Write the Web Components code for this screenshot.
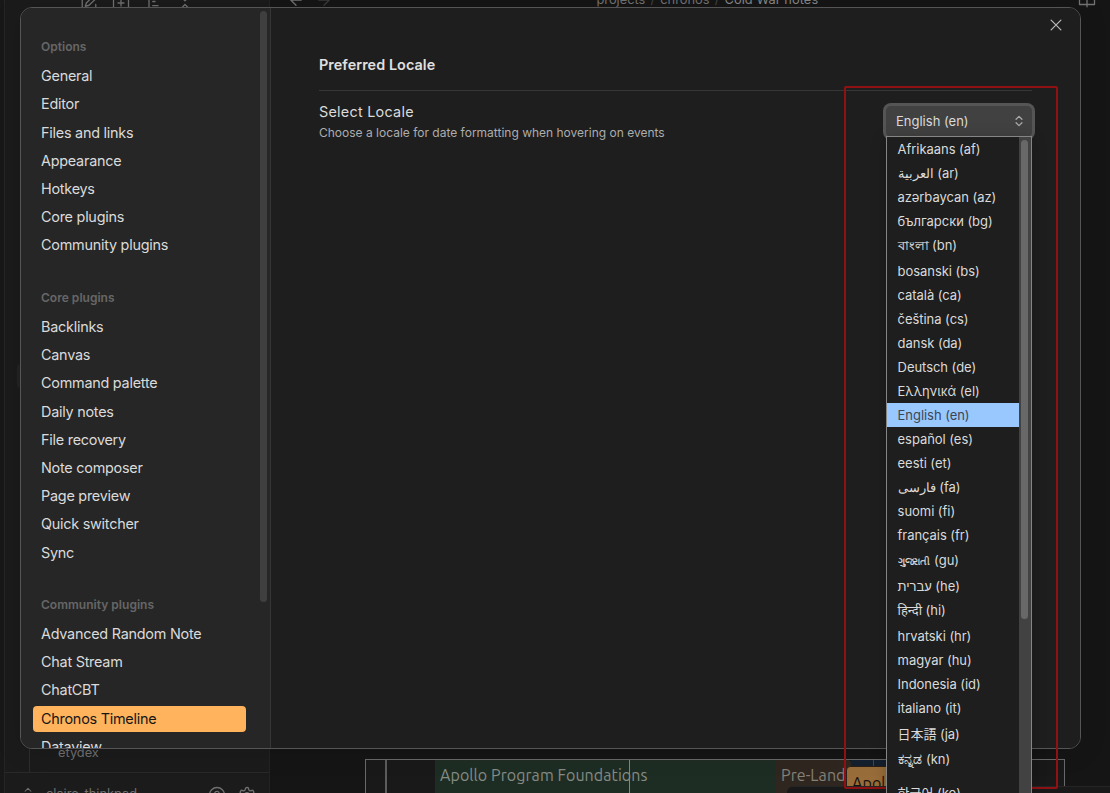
<!DOCTYPE html>
<html lang="en">
<head>
<meta charset="utf-8">
<title>Settings</title>
<style>
html,body{margin:0;height:100%;overflow:hidden;background:#161616}
body{font-family:Inter,"Noto Sans","Noto Sans CJK JP","Noto Sans CJK KR",sans-serif;color:#dadada}
</style>
</head>
<body>
<settings-app></settings-app>
<script>
const define = (name, css, html) => customElements.define(name, class extends HTMLElement {
  constructor(){
    super();
    const root = this.attachShadow({mode:'open'});
    root.innerHTML = `<style>*{box-sizing:border-box}${css}</style>${typeof html === 'function' ? html(this) : html}`;
  }
});
const icon = (body, size, extra='') => `<svg width="${size}" height="${size}" viewBox="0 0 24 24" fill="none" stroke="currentColor" stroke-width="1.75" stroke-linecap="round" stroke-linejoin="round" ${extra}>${body}</svg>`;

define('nav-heading', `:host{display:block;height:29px;padding-left:8px;font-size:12px;letter-spacing:.02px;line-height:26px;font-weight:600;color:#666;white-space:nowrap}`, '<slot></slot>');
define('nav-item', `:host{display:block;height:26.2px;margin-bottom:2px;padding-left:8px;border-radius:4px;font-size:14.4px;letter-spacing:-.24px;line-height:26px;color:#dadada;white-space:nowrap}
:host([active]){background:#ffb35c;color:#161616}`, '<slot></slot>');
define('nav-group', `:host{display:block;margin-bottom:26.4px}`, '<slot></slot>');
define('settings-nav', `:host{display:flex;width:250px;height:100%;background:#262626;border-right:1px solid #363636;overflow:hidden}
.list{width:225px;padding:26.3px 0 0 12px}
.thumb{width:7px;height:591px;margin:3px 0 0 14px;border-radius:4px;background:#3f3f3f}`, '<div class="list"><slot></slot></div><div class="thumb"></div>');

define('locale-select', `:host{display:flex;align-items:center;justify-content:space-between;width:146px;height:31px;margin-top:3px;padding:0 6px 1px 10px;border-radius:5px;background:#414141;box-shadow:0 0 0 3px #555;font-size:13px;color:#dadada}
svg{display:block;color:#aaa}`, '<span><slot></slot></span>' + icon('<path d="m7 15 5 5 5-5M7 9l5-5 5 5"/>',14,'style="stroke-width:2.2"'));

define('locale-option', `:host{display:flex;flex:none;align-items:flex-start;height:24px;padding-left:10.6px;font-size:13px;letter-spacing:-.05px;line-height:24px;color:#dadada;white-space:pre}
:host([selected]){background:#99c8ff;color:#3c4653}`, '<span><slot></slot></span>');

define('locale-menu', `:host{position:absolute;left:886px;top:136px;width:146px;height:657px;display:flex;border:1px solid #858585;border-bottom:0;background:#1e1e1e;box-shadow:0 2px 14px rgba(0,0,0,.2);overflow:hidden}
.rows{display:flex;flex-direction:column;width:132px}
.gu{font-size:10.4px;-webkit-text-stroke:.2px}.bn{font-size:12.6px;-webkit-text-stroke:.15px}.kn{font-size:14.4px;-webkit-text-stroke:.2px}
.track{width:12px;background:#424242;padding:3px 3px 0 2px}
.thumb{height:479px;border-radius:4px;background:#686868}`, () => {
  const rows = [['Afrikaans','af'],['العربية','ar'],['azərbaycan','az'],['български','bg'],['বাংলা','bn',26],['bosanski','bs'],['català','ca'],['čeština','cs'],['dansk','da'],['Deutsch','de'],['Ελληνικά','el'],['English','en'],['español','es'],['eesti','et'],['فارسی','fa'],['suomi','fi'],['français','fr'],['ગુજરાતી','gu',27,26],['עברית','he',24],['हिन्दी','hi',26],['hrvatski','hr'],['magyar','hu'],['Indonesia','id'],['italiano','it'],['日本語','ja',26,28],['ಕನ್ನಡ','kn',34,26],['한국어','ko',26,26]];
  return `<div class="rows">${rows.map(([n,c,h=24,l=24]) => `<locale-option ${c==='en'?'selected':''} style="height:${h}px;line-height:${l}px"><bdi class="${c}">${n}</bdi> (${c})</locale-option>`).join('')}</div><div class="track"><div class="thumb"></div></div>`;
});

define('settings-row', `:host{display:flex;justify-content:space-between;padding:12px 0 0}
.name{font-size:14.4px;letter-spacing:.25px;line-height:18px;color:#dadada}
.desc{font-size:12px;line-height:16px;margin-top:4px;color:#adadad}`, '<div><div class="name"><slot name="name"></slot></div><div class="desc"><slot name="desc"></slot></div></div><slot></slot>');

define('settings-pane', `:host{display:block;flex:1;height:100%;background:#1e1e1e;padding:0 48px;position:relative}
h2{margin:0;height:83px;padding-top:47px;font-size:14.4px;letter-spacing:.06px;line-height:20px;font-weight:600;border-bottom:1px solid #363636;color:#e0e0e0}
.close{position:absolute;right:15px;top:8px;color:#b3b3b3}
svg{display:block}`, `<h2>Preferred Locale</h2>
<div class="close">${icon('<path d="M18.500 5.500l-13 13M5.500 5.500l13 13"/>',18)}</div>
<settings-row><span slot="name">Select Locale</span><span slot="desc">Choose a locale for date formatting when hovering on events</span><locale-select>English (en)</locale-select></settings-row>`);

define('settings-modal', `:host{position:absolute;left:20px;top:7px;width:1061px;height:742px;display:flex;border:1px solid #555;border-radius:12px;overflow:hidden;box-shadow:0 2px 28px rgba(0,0,0,.12)}`, () => {
  const groups = {
    'Options':['General','Editor','Files and links','Appearance','Hotkeys','Core plugins','Community plugins'],
    'Core plugins':['Backlinks','Canvas','Command palette','Daily notes','File recovery','Note composer','Page preview','Quick switcher','Sync'],
    'Community plugins':['Advanced Random Note','Chat Stream','ChatCBT','Chronos Timeline','Dataview']};
  return `<settings-nav>${Object.entries(groups).map(([h,items]) => `<nav-group><nav-heading>${h}</nav-heading>${items.map(i => `<nav-item ${i==='Chronos Timeline'?'active':''}>${i}</nav-item>`).join('')}</nav-group>`).join('')}</settings-nav><settings-pane></settings-pane>`;
});

define('workspace-side', `:host{display:flex;flex-direction:column;justify-content:space-between;width:270px;height:793px;background:#1b1b1b;border-right:1px solid #232323;color:#707070;padding-left:4px;background-image:linear-gradient(#181818,#181818);background-size:4px 100%;background-repeat:no-repeat}
.in{border-left:1px solid #252525;height:100%;display:flex;flex-direction:column;justify-content:space-between}
.tools{display:flex;gap:13.5px;padding-left:75px;margin-top:-6.5px;height:20px}
.picked{height:24px;margin:0 12px;border-radius:4px;background:#232323;position:relative;top:-3px}
.tree{height:28px;margin-left:24px;border-left:1px solid #2c2c2c;padding-left:28px;font-size:12.8px;line-height:17px}
.foot{height:21px;border-top:1px solid #292929;display:flex;padding:13px 13px 0 16px;font-size:12.8px;line-height:16px;overflow:hidden}
.foot span{flex:1;margin-left:11px}
svg{display:block;flex:none}.foot svg+svg{margin-left:12px}`, `<div class="in"><div class="tools">
${icon('<path d="M10 3H3v18h18v-7M17.5 3l3.5 3.5L12 15l-5 1.5L8.500 12z"/>',18)}${icon('<path d="M2 3h20v18H2zM12 8v8M8 12h8"/>',18)}${icon('<path d="M4 3v19M9 10h3M9 15.500h7"/>',18,'style="margin-left:3px"')}${icon('<path d="m6 20 6-6 6 6M7 4l5 5 5-5"/>',18,'style="margin-left:-2px"')}</div><div class="picked"></div>
<div><div class="tree">etydex</div><div class="foot">${icon('<path d="m7 15 5 5 5-5M7 9l5-5 5 5"/>',14)}<span>claire_thinkpad</span>
${icon('<circle cx="12" cy="12" r="10"/><path d="M9.1 9a3 3 0 0 1 5.8 1c0 2-3 3-3 3M12 17h.01"/>',18)}
${icon('<path d="M12.22 2h-.44a2 2 0 0 0-2 2v.18a2 2 0 0 1-1 1.73l-.43.25a2 2 0 0 1-2 0l-.15-.08a2 2 0 0 0-2.73.73l-.22.38a2 2 0 0 0 .73 2.73l.15.1a2 2 0 0 1 1 1.72v.51a2 2 0 0 1-1 1.74l-.15.09a2 2 0 0 0-.73 2.73l.22.38a2 2 0 0 0 2.73.73l.15-.08a2 2 0 0 1 2 0l.43.25a2 2 0 0 1 1 1.73V20a2 2 0 0 0 2 2h.44a2 2 0 0 0 2-2v-.18a2 2 0 0 1 1-1.73l.43-.25a2 2 0 0 1 2 0l.15.08a2 2 0 0 0 2.73-.73l.22-.39a2 2 0 0 0-.73-2.73l-.15-.08a2 2 0 0 1-1-1.74v-.5a2 2 0 0 1 1-1.74l.15-.09a2 2 0 0 0 .73-2.73l-.22-.38a2 2 0 0 0-2.73-.73l-.15.08a2 2 0 0 1-2 0l-.43-.25a2 2 0 0 1-1-1.73V4a2 2 0 0 0-2-2z"/><circle cx="12" cy="12" r="3"/>',18)}</div></div></div>`);

define('chronos-timeline', `:host{display:flex;position:relative;width:700px;height:34px;margin-left:95px;border:1px solid #696969;border-bottom:0;overflow:hidden;background:#191919;font-family:Ubuntu,"Noto Sans",sans-serif;font-size:16px;letter-spacing:.07px;line-height:30px;color:#858b85;white-space:nowrap}
.gap{width:69px;padding-left:19px}.gap::before{content:"";display:block;width:2px;height:100%;background:#5c5c5c}
.a{width:341px;padding-left:5px;background:#1e2d23}
.b{width:75px;padding-left:5px;background:#2f271f;color:#858078;border-radius:0 4px 0 0}
.c{width:115px;background:#15202f}
.card{position:absolute;left:480px;top:6px;width:80px;height:40px;border-radius:4px;background:#996d3a;color:#15110c;padding-left:5px;line-height:32px;border:1px solid #2a2017}
i{position:absolute;top:0;bottom:0;width:1px;background:#858585}`, `<div class="gap"></div><div class="a"><span>Apollo Program Foundations</span></div><div class="b">Pre-Land</div><div class="c"></div><i style="left:263px"></i><i style="left:507px;background:#3d4856"></i><div class="card">Apol</div>`);

define('workspace-main', `:host{display:flex;flex-direction:column;justify-content:space-between;flex:1;height:793px;background:#151515;color:#737373}
.bar{display:flex;align-items:flex-start;height:20px;margin-top:-9px;padding-left:17px}
.crumbs{margin-left:263.5px;font-size:12.8px;line-height:17px;flex:1;white-space:pre}
b{font-weight:400;letter-spacing:.08px;color:#888}em{font-style:normal;color:#444;padding:0 1.6px}
svg+svg{margin-left:10px;color:#3b3b3b}
.bar svg:last-child{color:#737373;margin-right:14px}`, `<div class="bar">${icon('<path d="m12 19-7-7 7-7M19 12H5"/>',18)}${icon('<path d="m12 5 7 7-7 7M5 12h14"/>',18)}<div class="crumbs">projects<em> / </em>chronos<em> / </em><b>Cold War notes</b></div>${icon('<path d="M2 3h20v15H2zM12 4v17"/>',18)}</div><chronos-timeline></chronos-timeline>`);

define('region-frame', `:host{position:absolute;box-sizing:border-box;left:844px;top:86px;width:214px;height:703px;border:2px solid #8f1113;border-radius:2px}`, '');
define('settings-app', `:host{display:flex;position:relative;width:1110px;height:793px;overflow:hidden}
.status{position:absolute;left:787px;top:786px;width:323px;height:7px;background:#191919;border-top:1px solid #252525;border-radius:6px 0 0 0}`, `<workspace-side></workspace-side><workspace-main></workspace-main><div class="status"></div><settings-modal></settings-modal><region-frame></region-frame><locale-menu></locale-menu>`);
</script>
</body>
</html>
